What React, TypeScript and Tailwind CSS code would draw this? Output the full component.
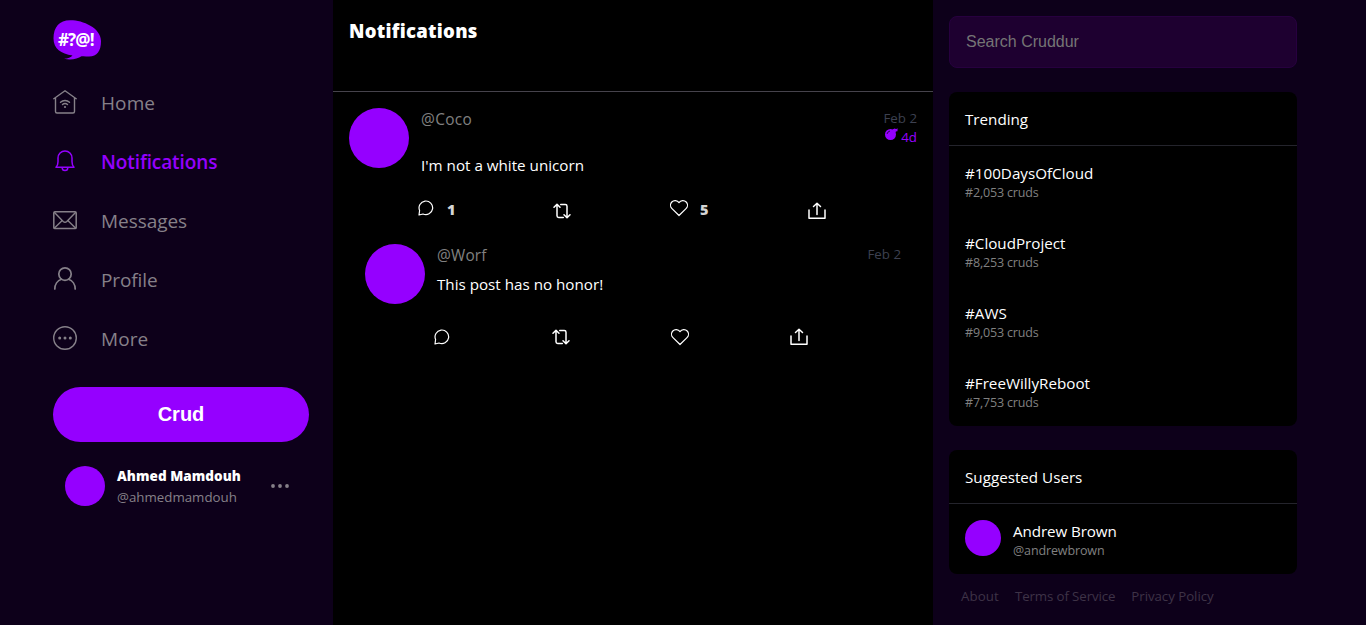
import type { ReactNode } from 'react';

const ui = "font-['Open_Sans','Noto_Sans',sans-serif]";

function Icon({ size = 24, className = '', children }: { size?: number; className?: string; children: ReactNode }) {
  return (
    <svg width={size} height={size} viewBox={`0 0 ${size} ${size}`} fill="none" stroke="currentColor" strokeLinecap="round" strokeLinejoin="round" className={`shrink-0 ${className}`}>
      {children}
    </svg>
  );
}

function Logo() {
  return (
    <div className="relative h-10 w-12">
      <svg width="48" height="40" viewBox="0 0 48 40" className="block">
        <path d="M17 .3C29 0 48 7.500 48 21C48 31 44 36.500 36 36.500C33.500 36.500 31 36 28.500 36.300C24.500 39 18 40.500 11 38.800C15 38.500 18 37.500 19.500 35.500C8 34 .5 28.500 .5 18.500C.5 7 6.500 .5 17 .3Z" fill="#9500ff" />
      </svg>
      <span className="absolute left-[5px] top-[10px] text-[17px] font-bold leading-5 tracking-[-0.9px] text-white">#?@!</span>
    </div>
  );
}

const HomeIcon = () => (
  <Icon>
    <path d="M.8 8.700 12 .8l11.200 7.900M2.500 7.800v13.700a1.500 1.500 0 0 0 1.500 1.500h16a1.500 1.500 0 0 0 1.500-1.500V7.800" strokeWidth="1.400" />
    <path d="M7.500 12.300a6.500 6.500 0 0 1 9 0M9.500 14.600a3.600 3.600 0 0 1 5 0" strokeWidth="1.400" />
    <circle cx="12" cy="17" r="1.100" fill="currentColor" stroke="none" />
  </Icon>
);
const BellIcon = () => (
  <Icon>
    <path d="M3 18.300h18c-1.500-1.500-2-3-2-5.500V9A7 7 0 0 0 5 9v3.800c0 2.500-.5 4-2 5.500ZM9.200 18.800a2.800 2.800 0 0 0 5.600 0" strokeWidth="1.500" />
  </Icon>
);
const MailIcon = () => (
  <Icon>
    <rect x=".8" y="3.800" width="22.400" height="16.800" rx="1.200" strokeWidth="1.500" />
    <path d="m1.500 4.500 8.700 8.900a2.700 2.700 0 0 0 3.600 0L22.500 4.500M1.500 20l7.700-7.500M22.500 20l-7.700-7.500" strokeWidth="1.400" />
  </Icon>
);
const ProfileIcon = () => (
  <Icon>
    <circle cx="12" cy="7.100" r="6.200" strokeWidth="1.700" />
    <path d="M1.800 22c0-4.300 2.600-8.400 6.700-9.800M22.200 22c0-4.300-2.600-8.400-6.700-9.800" strokeWidth="1.700" />
  </Icon>
);
const MoreIcon = () => (
  <Icon>
    <circle cx="12" cy="12" r="11.300" strokeWidth="1.400" />
    <g fill="currentColor" stroke="none">
      <circle cx="6.700" cy="12" r="1.500" />
      <circle cx="12" cy="12" r="1.500" />
      <circle cx="17.300" cy="12" r="1.500" />
    </g>
  </Icon>
);

const ReplyIcon = () => (
  <Icon size={16}>
    <path d="M1 15l.6-4.500A6.800 6.800 0 1 1 5 14Z" strokeWidth="1.200" />
  </Icon>
);
const RepostIcon = () => (
  <Icon size={18}>
    <path d="M1 5.300 4 2.200l3 3.100M4 2.500v11.300a1.700 1.700 0 0 0 1.700 1.700h4.600M17 12.700l-3 3.100-3-3.100M14 15.500V4.200a1.700 1.700 0 0 0-1.700-1.700H7.700" strokeWidth="1.500" />
  </Icon>
);
const HeartIcon = () => (
  <Icon size={18}>
    <path d="M9 16.500 2 9.600A4.700 4.700 0 0 1 1.800 3C3.800.9 7.200 1.100 9 3.700 10.800 1.100 14.200.9 16.200 3a4.700 4.700 0 0 1-.2 6.600Z" strokeWidth="1.200" />
  </Icon>
);
const ShareIcon = () => (
  <Icon size={18}>
    <path d="M1 8v8.200h16V8" strokeWidth="1.500" />
    <path d="M9 12.500V1.500M5.500 4.500 9 1.200l3.500 3.300" strokeWidth="1.500" />
  </Icon>
);
const BombIcon = () => (
  <svg width="14" height="13" viewBox="0 0 14 13" fill="#9500ff">
    <circle cx="6.500" cy="6.500" r="5.500" />
    <path d="m8.500 1.500 2-1 1.500.6L14 .5l-.8 1.800L14 3l-2 .5L10.500 5Z" />
    <path d="M3 6A4 4 0 0 1 6 3" fill="none" stroke="#25003f" strokeWidth=".9" />
  </svg>
);

const nav = [
  { label: 'Home', icon: <HomeIcon />, style: 'tracking-[0.1px]' },
  { label: 'Notifications', icon: <BellIcon />, style: 'tracking-[-0.1px]', active: true },
  { label: 'Messages', icon: <MailIcon />, style: 'tracking-[-0.05px]' },
  { label: 'Profile', icon: <ProfileIcon />, style: 'tracking-[-0.1px]' },
  { label: 'More', icon: <MoreIcon />, style: 'tracking-[0.1px]' },
];

const trends = [
  ['#100DaysOfCloud', '#2,053 cruds'],
  ['#CloudProject', '#8,253 cruds'],
  ['#AWS', '#9,053 cruds'],
  ['#FreeWillyReboot', '#7,753 cruds'],
];

function Sidebar() {
  return (
    <aside className="flex w-[333px] shrink-0 flex-col pl-[53px] pr-6 pt-5">
      <Logo />
      <nav className="mt-[13px] flex flex-col">
        {nav.map((n) => (
          <a key={n.label} className={`flex h-[59px] items-center gap-6 text-[19px] leading-6 ${n.style} ${n.active ? 'font-semibold text-[#9500ff]' : 'text-[#868089]'}`}>
            <span className="-mt-0.5">{n.icon}</span>
            {n.label}
          </a>
        ))}
      </nav>
      <button className="mt-[19px] h-[55px] rounded-full bg-[#9500ff] pb-0.5 font-['Liberation_Sans',sans-serif] text-[20px] font-bold text-white">Crud</button>
      <div className="mt-6 flex h-10 items-center pl-3">
        <div className="size-10 rounded-full bg-[#9500ff]" />
        <div className="ml-3 flex w-[153px] flex-col pt-0.5">
          <span className="text-[13.500px] font-extrabold leading-[21px] tracking-[0.05px] text-white">Ahmed Mamdouh</span>
          <span className="text-[13.300px] leading-[21px] text-[#868089]">@ahmedmamdouh</span>
        </div>
        <svg width="20" height="4" viewBox="0 0 20 4" fill="#868089">
          <circle cx="3" cy="2" r="1.900" />
          <circle cx="10" cy="2" r="1.900" />
          <circle cx="17" cy="2" r="1.900" />
        </svg>
      </div>
    </aside>
  );
}

function Feed() {
  return (
    <main className="w-[600px] shrink-0 bg-black">
      <header className="h-[92px] border-b border-[#46434c] px-4 pt-[19px]">
        <h1 className="text-[18.500px] font-extrabold leading-6 tracking-[0.27px] text-white">Notifications</h1>
      </header>
      <article className="h-[136px] px-4 pt-4">
        <div className="flex">
          <div className="size-[60px] rounded-full bg-[#9500ff]" />
          <div className="ml-3 flex-1">
            <div className="h-[46px] text-[15.400px] leading-[23px] tracking-[0.35px] text-[#808080]">@Coco</div>
            <p className="text-[15.200px] leading-[23px] text-white">I'm not a white unicorn</p>
          </div>
          <div className="flex flex-col items-end pt-px text-[13.300px] leading-[19px]">
            <span className="text-[#3d4050]">Feb 2</span>
            <span className="flex gap-[3px] text-[#9500ff]">
              <BombIcon />
              4d
            </span>
          </div>
        </div>
        <div className="flex pl-[69px] pt-[22px] text-[14.500px] font-extrabold leading-[22px] text-[#d5d5d5]">
          <div className="flex w-[135px] gap-[13px]"><span className="pt-px text-white"><ReplyIcon /></span>1</div>
          <div className="w-[117px] pt-[3px] text-white"><RepostIcon /></div>
          <div className="flex w-[138px] gap-[12px]"><span className="text-white"><HeartIcon /></span>5</div>
          <div className="pt-[3px] text-white"><ShareIcon /></div>
        </div>
      </article>
      <article className="px-8 pt-4">
        <div className="flex">
          <div className="size-[60px] rounded-full bg-[#9500ff]" />
          <div className="ml-3 flex-1">
            <div className="h-[29px] text-[15.400px] leading-[23px] tracking-[0.2px] text-[#808080]">@Worf</div>
            <p className="text-[15.200px] leading-[23px] text-white">This post has no honor!</p>
          </div>
          <span className="pt-px text-[13.300px] leading-[19px] text-[#3d4050]">Feb 2</span>
        </div>
        <div className="flex items-center pl-[69px] pt-6 text-white">
          <div className="w-[118px]"><ReplyIcon /></div>
          <div className="w-[119px]"><RepostIcon /></div>
          <div className="w-[119px]"><HeartIcon /></div>
          <div><ShareIcon /></div>
        </div>
      </article>
    </main>
  );
}

function Card({ title, children }: { title: string; children: ReactNode }) {
  return (
    <section className="mt-6 rounded-lg bg-black">
      <h2 className="h-[54px] border-b border-[#24242c] px-4 pt-4 text-[15.200px] leading-[23px] text-white">{title}</h2>
      {children}
    </section>
  );
}

function Rail() {
  return (
    <aside className="w-[364px] pl-4 pt-4">
      <input placeholder="Search Cruddur" className="block h-[52px] w-full rounded-lg border border-[#27003f] bg-[#1e0030] px-4 font-['Liberation_Sans',sans-serif] text-[16px] text-white outline-none placeholder:text-[#757575]" />
      <Card title="Trending">
        {trends.map(([tag, count]) => (
          <div key={tag} className="flex h-[70px] flex-col px-4 pt-4">
            <span className="text-[15.200px] leading-[22px] text-white">{tag}</span>
            <span className="text-[12.500px] leading-[17px] tracking-[-0.17px] text-[#808080]">{count}</span>
          </div>
        ))}
      </Card>
      <Card title="Suggested Users">
        <div className="flex h-[70px] px-4 pt-4">
          <div className="size-9 rounded-full bg-[#9500ff]" />
          <div className="ml-3 flex flex-col">
            <span className="text-[15.200px] leading-[22px] tracking-[-0.1px] text-white">Andrew Brown</span>
            <span className="text-[12.500px] leading-[17px] tracking-[-0.12px] text-[#808080]">@andrewbrown</span>
          </div>
        </div>
      </Card>
      <footer className="flex gap-4 pl-3 pt-3 text-[13.300px] leading-5 text-[#3e3347]">
        <a className="tracking-[0.1px]">About</a>
        <a className="tracking-[-0.12px]">Terms of Service</a>
        <a className="tracking-[-0.05px]">Privacy Policy</a>
      </footer>
    </aside>
  );
}

export default function App() {
  return (
    <div className={`flex h-[625px] w-[1366px] overflow-hidden bg-[#0d001a] ${ui}`}>
      <Sidebar />
      <Feed />
      <Rail />
    </div>
  );
}
